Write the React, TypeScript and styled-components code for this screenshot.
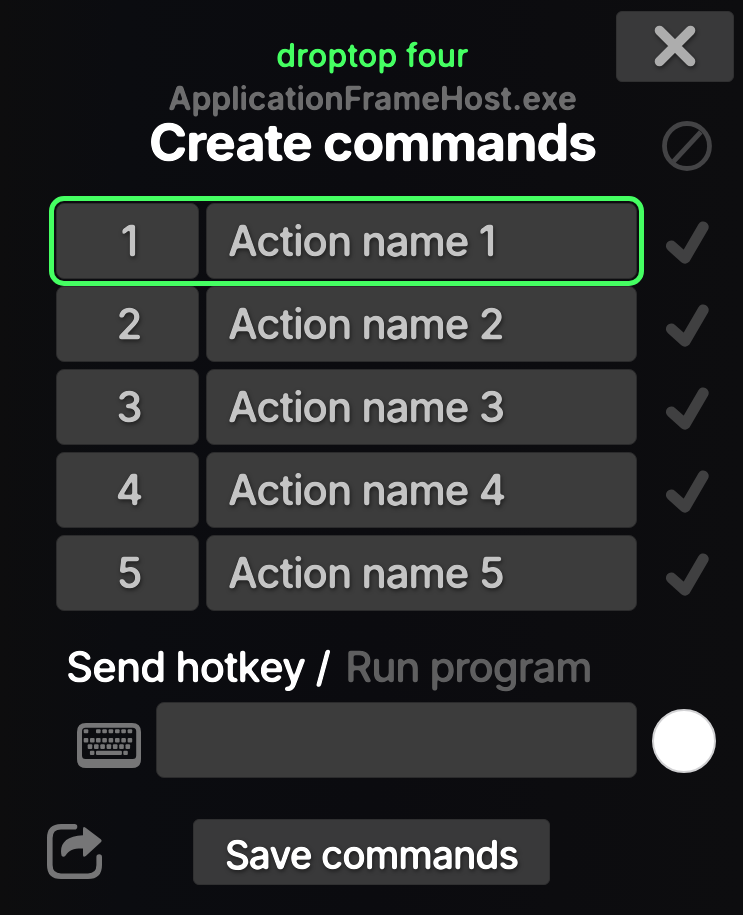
import React from "react";
import styled, { createGlobalStyle } from "styled-components";

const GlobalStyle = createGlobalStyle`
  * { box-sizing: border-box; }
  body { margin: 0; background: #0c0c0f; font-family: Inter, "Liberation Sans", sans-serif; }
  button { font: inherit; border: 0; padding: 0; background: none; color: inherit; }
  svg { display: block; }
`;

const Panel = styled.main`
  width: 743px;
  height: 915px;
  overflow: hidden;
  display: flex;
  flex-direction: column;
  background: linear-gradient(90deg, #0d0d0e 0%, #0b0c10 16%, #0b0b0f 50%, #0d0d0f 100%);
`;

const Label = styled.span<{
  $size: number;
  $weight: number;
  $color: string;
  $spacing?: number;
  $shadow?: boolean;
}>`
  display: block;
  white-space: nowrap;
  font-size: ${(p) => p.$size}px;
  line-height: 1;
  font-weight: ${(p) => p.$weight};
  letter-spacing: ${(p) => p.$spacing ?? 0}px;
  color: ${(p) => p.$color};
  filter: url(#soft-corners) ${(p) => (p.$shadow ? "drop-shadow(1px 2px 2px rgba(0, 0, 0, 0.5))" : "")};
`;

const Header = styled.header`
  display: grid;
  grid-template-columns: 616px 118px;
  height: 203px;
`;

const Titles = styled.div`
  display: flex;
  flex-direction: column;
  align-items: center;
  padding: 40px 0 0 129px;
`;

const ProgramName = styled.div`
  margin-top: 11px;
`;

const Heading = styled.h1`
  margin: 2px 0 0;
`;

const HeaderActions = styled.div`
  display: flex;
  flex-direction: column;
  align-items: center;
  padding-top: 11px;
`;

const CloseButton = styled.button`
  display: grid;
  place-items: center;
  width: 118px;
  height: 71px;
  padding-bottom: 1px;
  border-radius: 6px;
  background: #39393a;
  border: 1px solid #303031;

  svg { filter: drop-shadow(1px 2px 2px rgba(0, 0, 0, 0.45)); }
`;

const ClearButton = styled.button`
  margin: 39px 0 0 23px;
`;

const ActionList = styled.div`
  display: flex;
  flex-direction: column;
  gap: 7px;
  padding-left: 56px;
`;

const ActionLine = styled.div`
  display: flex;
  align-items: center;
  gap: 28px;
`;

const ActionFields = styled.div<{ $selected: boolean }>`
  display: grid;
  grid-template-columns: 143px 431px;
  gap: 7px;
  height: 76px;
  border-radius: 8px;
  outline: ${(p) => (p.$selected ? "5px solid #45ff62" : "none")};
  outline-offset: 2px;
`;

const Field = styled.div<{ $centered?: boolean }>`
  display: flex;
  align-items: center;
  justify-content: ${(p) => (p.$centered ? "center" : "flex-start")};
  padding: ${(p) => (p.$centered ? "0 0 0 4px" : "0 0 0 21px")};
  border-radius: 8px;
  background: #3c3c3c;
  border: 1px solid #2b2b2c;
`;

const CheckSlot = styled.div`
  padding-top: 2px;
`;

const ModeTabs = styled.div`
  display: flex;
  gap: 15px;
  height: 42px;
  margin: 35px 0 0 66px;
`;

const HotkeyRow = styled.div`
  display: flex;
  align-items: center;
  height: 76px;
  margin: 14px 0 0 77px;
`;

const KeyboardSlot = styled.div`
  width: 79px;
  padding-top: 10px;
`;

const HotkeyInput = styled.div`
  width: 481px;
  height: 76px;
  border-radius: 8px;
  background: #3c3c3c;
  border: 1px solid #2b2b2c;
`;

const RecordButton = styled.button`
  width: 64px;
  height: 64px;
  margin: 2px 0 0 15px;
  border-radius: 50%;
  background: #fff;
  border: 2px solid #d2d2d4;
`;

const Footer = styled.footer`
  display: flex;
  align-items: center;
  gap: 91px;
  height: 66px;
  margin: 41px 0 0 47px;
`;

const ShareButton = styled.button`
  padding-bottom: 1px;
`;

const SaveButton = styled.button`
  display: grid;
  place-items: center;
  width: 357px;
  height: 66px;
  padding-top: 5px;
  border-radius: 6px;
  background: #39393a;
  border: 1px solid #303031;
`;

const FilterDefs = styled.svg`
  position: absolute;
`;

/* Rounds the stroke ends of the lettering. */
const CornerFilter = () => (
  <FilterDefs width="0" height="0" aria-hidden="true">
    <filter id="soft-corners" x="-5%" y="-20%" width="110%" height="140%" colorInterpolationFilters="sRGB">
      <feGaussianBlur stdDeviation="1.1" />
      <feComponentTransfer>
        <feFuncA type="linear" slope="3.6" intercept="-0.95" />
      </feComponentTransfer>
    </filter>
  </FilterDefs>
);

const CloseIcon = () => (
  <svg width="42" height="42" viewBox="0 0 42 42" fill="none" stroke="#adadad" strokeWidth="9.6" strokeLinecap="round">
    <path d="M5.5 5.5 36.5 36.5M36.5 5.5 5.5 36.5" />
  </svg>
);

const ClearIcon = () => (
  <svg width="50" height="50" viewBox="0 0 50 50" fill="none" stroke="#434345" strokeWidth="4.8">
    <circle cx="25" cy="25" r="22.5" />
    <path d="M11.5 40.5 38.8 11" />
  </svg>
);

const CheckIcon = () => (
  <svg width="44" height="44" viewBox="0 0 44 44" fill="none" stroke="#404041" strokeWidth="11" strokeLinecap="round" strokeLinejoin="round">
    <path d="M6.4 26 20 38.2 38.2 6.9" />
  </svg>
);

const numberRow = [6.7, 19, 25.3, 31.6, 38, 44.3, 50.6];
const upperRow = [6.7, 13, 19, 25.3, 31.6, 38, 44.3, 50.6];
const lowerRow = [10.7, 17, 23.3, 29.6, 35.9, 42.2, 48.5];

const KeyboardIcon = () => (
  <svg width="64" height="45" viewBox="0 0 64 45" fill="#767677">
    <path fillRule="evenodd" d="M9 0H55Q64 0 64 9V36Q64 45 55 45H9Q0 45 0 36V9Q0 0 9 0ZM8.5 4.7Q5 4.7 5 8.2V32.5Q5 36 8.5 36H55.7Q59.2 36 59.2 32.5V8.2Q59.2 4.7 55.7 4.7Z" />
    {numberRow.map((x) => (
      <rect key={x} x={x} y="6.3" width="4.6" height="4" rx="1" />
    ))}
    {upperRow.map((x) => (
      <rect key={x} x={x} y="15" width="4.6" height="4.6" rx="1" />
    ))}
    {lowerRow.map((x) => (
      <rect key={x} x={x} y="21.3" width="4.6" height="4.6" rx="1" />
    ))}
    <rect x="12.9" y="27.7" width="4.5" height="4.4" rx="1" />
    <rect x="19" y="27.7" width="25.9" height="4.4" rx="1" />
    <rect x="46.3" y="27.7" width="4.5" height="4.4" rx="1" />
  </svg>
);

const ShareIcon = () => (
  <svg width="55" height="55" viewBox="0 0 55 55" fill="none">
    <path d="M27.5 2.8H14Q2.8 2.8 2.8 14V41Q2.8 52.2 14 52.2H41Q52.2 52.2 52.2 41V33" stroke="#767677" strokeWidth="5.6" strokeLinecap="round" />
    <path d="M36 5Q36 1.8 38.6 3.8L53.8 15.2Q55.4 16.7 53.8 18.2L38.8 32Q36 34 36 31V24.6C27 24.4 22 26 18.6 31.6Q16.4 34 14.6 31.8C12 21 18 11.6 36 11.2Z" fill="#767677" />
  </svg>
);

const actions = [1, 2, 3, 4, 5];

export default function App() {
  return (
    <>
      <GlobalStyle />
      <CornerFilter />
      <Panel>
        <Header>
          <Titles>
            <Label $size={32} $weight={500} $color="#45ff62" $spacing={0.1}>droptop four</Label>
            <ProgramName>
              <Label $size={32} $weight={600} $color="#6d6d6e" $spacing={-0.05}>ApplicationFrameHost.exe</Label>
            </ProgramName>
            <Heading>
              <Label $size={52} $weight={700} $color="#ffffff" $spacing={-1.1}>Create commands</Label>
            </Heading>
          </Titles>
          <HeaderActions>
            <CloseButton aria-label="Close"><CloseIcon /></CloseButton>
            <ClearButton aria-label="Clear"><ClearIcon /></ClearButton>
          </HeaderActions>
        </Header>
        <ActionList>
          {actions.map((n) => (
            <ActionLine key={n}>
              <ActionFields $selected={n === 1}>
                <Field $centered>
                  <Label $size={42} $weight={500} $color="#c4c4c4" $shadow>{n}</Label>
                </Field>
                <Field>
                  <Label $size={42} $weight={500} $color="#c4c4c4" $spacing={-1} $shadow>Action name {n}</Label>
                </Field>
              </ActionFields>
              <CheckSlot><CheckIcon /></CheckSlot>
            </ActionLine>
          ))}
        </ActionList>
        <ModeTabs>
          <Label $size={42} $weight={500} $color="#ffffff" $spacing={-0.95}>Send hotkey /</Label>
          <Label $size={42} $weight={500} $color="#5f5f60" $spacing={-1.15}>Run program</Label>
        </ModeTabs>
        <HotkeyRow>
          <KeyboardSlot><KeyboardIcon /></KeyboardSlot>
          <HotkeyInput />
          <RecordButton aria-label="Record hotkey" />
        </HotkeyRow>
        <Footer>
          <ShareButton aria-label="Share"><ShareIcon /></ShareButton>
          <SaveButton>
            <Label $size={39} $weight={500} $color="#ffffff" $spacing={-1.1} $shadow>Save commands</Label>
          </SaveButton>
        </Footer>
      </Panel>
    </>
  );
}
